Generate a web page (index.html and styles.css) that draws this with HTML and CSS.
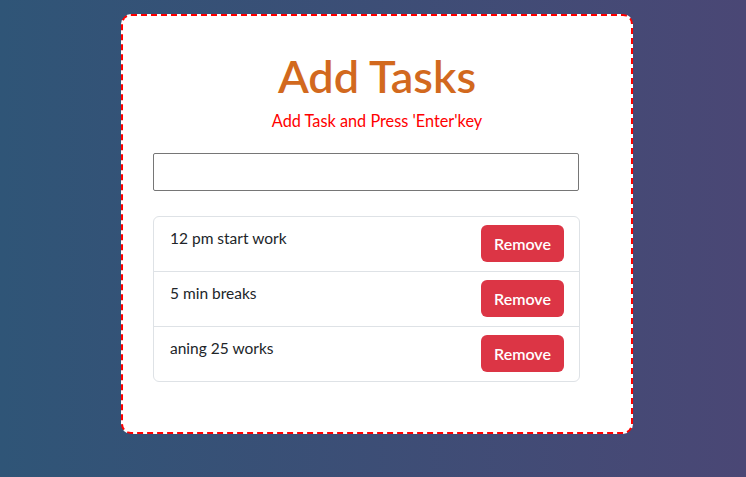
FILE: index.html
```html
<!DOCTYPE html>
<html>
<head>
<meta charset="utf-8">
<link rel="stylesheet" href="styles.css">
</head>
<body>
<div class="page">
  <div class="card">
    <h1 class="title">Add Tasks</h1>
    <p class="hint">Add Task and Press 'Enter'key</p>
    <input class="task-input" type="text">
    <ul class="list">
      <li class="item"><span class="item-text">12 pm start work</span><button class="btn">Remove</button></li>
      <li class="item"><span class="item-text">5 min breaks</span><button class="btn">Remove</button></li>
      <li class="item"><span class="item-text">aning 25 works</span><button class="btn">Remove</button></li>
    </ul>
  </div>
</div>
</body>
</html>
```
FILE: styles.css
```css
* { box-sizing: border-box; }
html, body { margin: 0; padding: 0; height: 100%; }
body {
  font-family: Lato, "Noto Sans", sans-serif;
  background: linear-gradient(to right, #2f5577, #4a4775);
}
.page {
  height: 477px;
  display: flex;
  justify-content: center;
  padding: 14px 0 0 8px;
}
.card {
  width: 512px;
  height: 420px;
  background: #fff;
  border: 2px dashed #ff0000;
  border-radius: 10px;
  padding: 0 30px;
  display: flex;
  flex-direction: column;
}
.title {
  margin: 34px 0 0;
  text-align: center;
  color: #d2691e;
  font-size: 45px;
  font-weight: 600;
  line-height: 52px;
}
.hint {
  margin: 9px 0 0;
  text-align: center;
  color: #ff0000;
  font-size: 16.3px;
  line-height: 20px;
}
.task-input {
  margin: 22px 0 0;
  width: 426px;
  height: 38px;
  border: 1px solid #767676;
  border-radius: 2px;
  padding: 0 8px;
  font: inherit;
}
.list {
  list-style: none;
  margin: 25px 0 0;
  padding: 0;
  width: 427px;
  border: 1px solid #dee2e6;
  border-radius: 6px;
}
.item {
  display: flex;
  justify-content: space-between;
  align-items: flex-start;
  padding: 8px 15px 8px 16px;
  height: 55px;
  border-top: 1px solid #dee2e6;
}
.item:first-child { border-top: none; height: 54px; }
.item-text {
  color: #212529;
  font-size: 15.5px;
  line-height: 26px;
}
.btn {
  width: 83px;
  height: 37px;
  background: #dc3545;
  color: #fff;
  border: none;
  border-radius: 6px;
  font-family: inherit;
  font-size: 16px;
  font-weight: 600;
}
```
